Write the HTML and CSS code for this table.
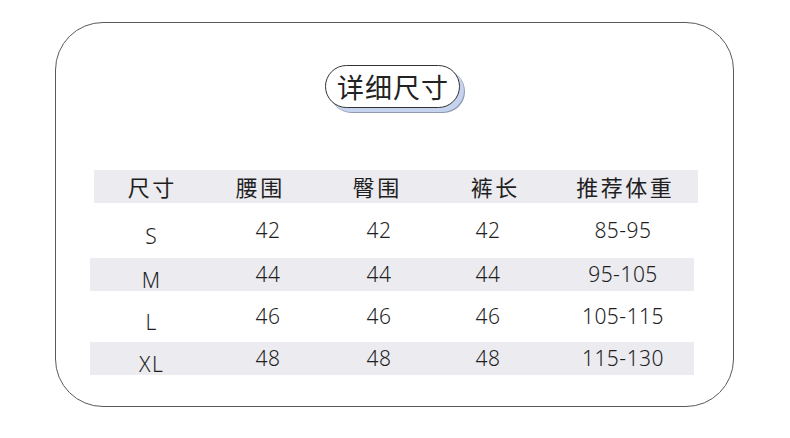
FILE: index.html
```html
<!DOCTYPE html>
<html lang="zh-CN">
<head>
<meta charset="utf-8">
<title>详细尺寸</title>
<link rel="stylesheet" href="styles.css">
</head>
<body>
<div class="card">
  <div class="title-wrap">
    <div class="title">详细尺寸</div>
  </div>
  <div class="table">
    <div class="row head">
      <div class="cell">尺寸</div>
      <div class="cell">腰围</div>
      <div class="cell">臀围</div>
      <div class="cell">裤长</div>
      <div class="cell">推荐体重</div>
    </div>
    <div class="row data first">
      <div class="cell size">S</div>
      <div class="cell">42</div>
      <div class="cell">42</div>
      <div class="cell">42</div>
      <div class="cell">85-95</div>
    </div>
    <div class="row data band">
      <div class="cell size">M</div>
      <div class="cell">44</div>
      <div class="cell">44</div>
      <div class="cell">44</div>
      <div class="cell">95-105</div>
    </div>
    <div class="row data">
      <div class="cell size">L</div>
      <div class="cell">46</div>
      <div class="cell">46</div>
      <div class="cell">46</div>
      <div class="cell">105-115</div>
    </div>
    <div class="row data band">
      <div class="cell size">XL</div>
      <div class="cell">48</div>
      <div class="cell">48</div>
      <div class="cell">48</div>
      <div class="cell">115-130</div>
    </div>
  </div>
</div>
</body>
</html>
```

FILE: styles.css
```css
html, body {
  margin: 0;
  padding: 0;
  background: #ffffff;
}

body {
  width: 790px;
  height: 438px;
  overflow: hidden;
  font-family: "Noto Sans", "Noto Sans CJK SC", sans-serif;
  color: #1f1f1f;
}

.card {
  box-sizing: border-box;
  width: 679px;
  height: 385px;
  margin: 22px 0 0 55px;
  border: 1px solid #5a5a5a;
  border-radius: 48px;
  padding-top: 42px;
  display: flex;
  flex-direction: column;
}

.title-wrap {
  display: flex;
  justify-content: center;
  padding-right: 4px;
  margin-bottom: 62px;
}

.title {
  box-sizing: border-box;
  width: 135px;
  height: 43px;
  border: 1.5px solid #333333;
  border-radius: 22px;
  background: #ffffff;
  box-shadow: 4px 4px 0 0 #c6d3ee, 5px 5px 0 0 #8e9ab2;
  display: flex;
  align-items: center;
  justify-content: center;
  font-family: "Noto Sans CJK SC", sans-serif;
  font-size: 27px;
  letter-spacing: 1px;
  padding-left: 1px;
  color: #222222;
}

.table {
  margin-left: 34px;
  width: 608px;
  display: flex;
  flex-direction: column;
  gap: 9px;
}

.row {
  display: grid;
  height: 33px;
  align-items: center;
  width: 604px;
}

.head {
  margin-left: 4px;
  background: #ebebf0;
  grid-template-columns: 114px 102px 132px 104px 156px;
  margin-bottom: 2px;
}

.head .cell {
  font-family: "Noto Sans CJK SC", sans-serif;
  font-size: 22px;
  line-height: 33px;
  letter-spacing: 2.5px;
  padding-left: 2.5px;
  text-align: center;
  white-space: nowrap;
}

.data {
  grid-template-columns: 122px 112px 110px 108px 162px;
}

.data.first {
  margin-bottom: 2px;
}

.band {
  background: #ebebf0;
}

.data .cell {
  font-size: 21px;
  font-weight: 350;
  line-height: 33px;
  letter-spacing: 0.5px;
  text-align: center;
  white-space: nowrap;
  height: 33px;
  box-sizing: border-box;
}

.data .cell.size {
  padding-top: 6px;
  letter-spacing: 1.5px;
  padding-left: 1.5px;
}
```
